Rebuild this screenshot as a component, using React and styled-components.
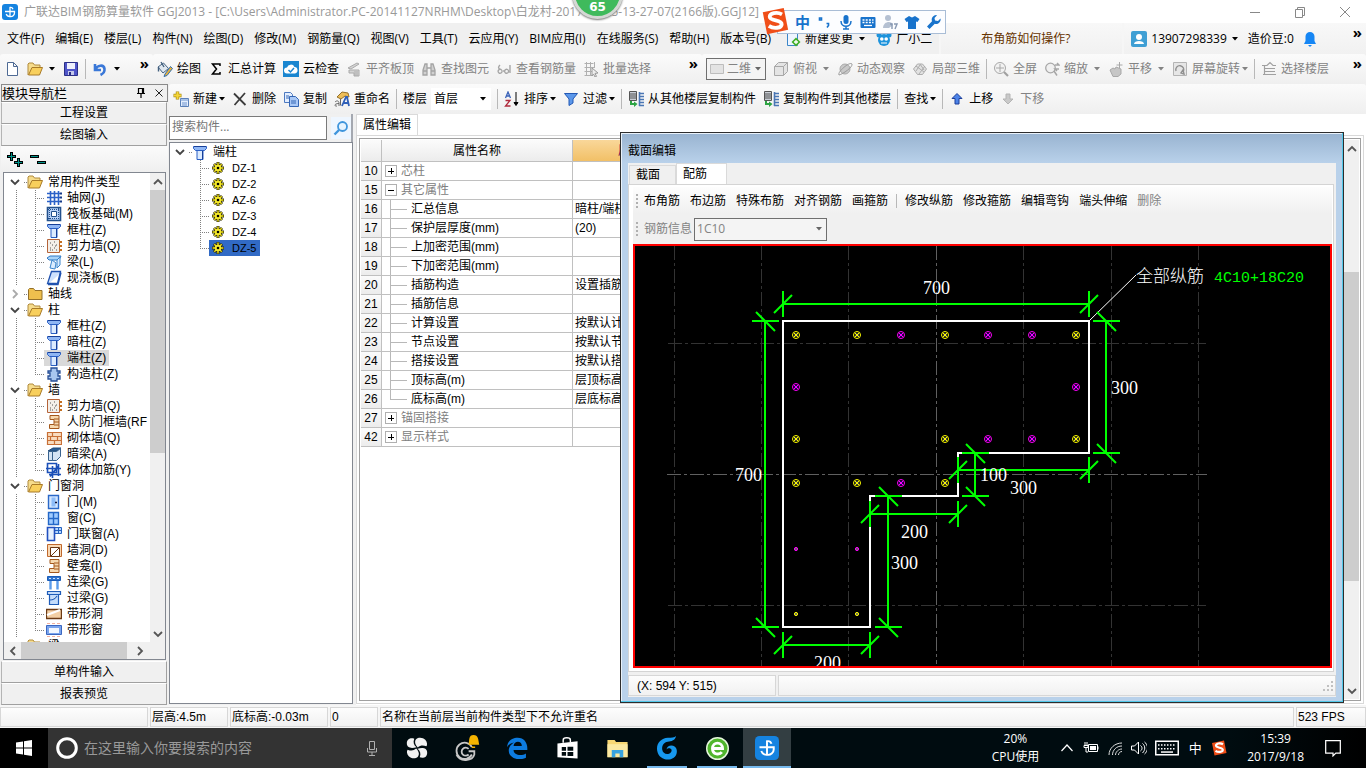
import React from "react";
import styled, { createGlobalStyle, css } from "styled-components";

const UI = `"Open Sans", "Noto Sans CJK SC", sans-serif`;
const SONG = `"Liberation Sans", "Noto Sans CJK SC", sans-serif`;

const Global = createGlobalStyle`
  *, *::before, *::after { box-sizing: border-box; }
  html, body { margin: 0; background: #f0f0f0; }
  body { font: 12px/16px ${UI}; color: #000; overflow: hidden; }
  button, input, select { font: inherit; color: inherit; margin: 0; }
  button { background: none; border: 0; padding: 0; white-space: nowrap; cursor: default; }
  svg { display: block; flex: none; }
`;

/* ---------- icons ---------- */

const blue = "#2a5fc4";
const folderOpen = (
  <>
    <path d="M1 14V3l1-1h4l1.500 2H13v3" fill="#f6dc8c" stroke="#b08a3c" />
    <path d="M1.500 14 5 6.500h10.500L12.500 14z" fill="#f8cf5c" stroke="#a87a28" />
  </>
);
const column = (
  <>
    <path d="M1.500 2.500h13v2l-2 2h-9l-2-2z" fill="#8fb6f4" stroke={blue} />
    <path d="M5 6.500h6v9H5z" fill="#dcebff" stroke={blue} />
    <path d="M10.500 7v8.500M2 2.500h12" stroke="#173f98" />
  </>
);
const wallDots = (
  <>
    <path d="M1.500 1.500h12v13h-12z" fill="#f3efe9" stroke="#b5643a" />
    <path d="M4 5h1M8 4h1M6 7h1M10 7h1M4 10h1M8 10h1M6 12h1M10 12h1M4 12h1M9 8h1" stroke="#555" />
    <path d="M13 4h3M13 8h3M13 12h3" stroke="#c47022" strokeWidth="2" />
  </>
);
const bracket = (
  <path d="M4 1.500h9v13H3.500v-4H8v-5H4z M8 5h5M8 8h5M8 11h5" fill="#f6d9b0" stroke="#a4581c" />
);

const GLYPHS = {
  app: (
    <>
      <rect width="16" height="16" rx="3" fill="#1583e0" />
      <path d="M11 5.200A2.600 2.600 0 0 0 8 3.500V12M3 7.500h9.500v1.200A3.800 3.800 0 0 1 8 12.500 3.800 3.800 0 0 1 4.200 10" fill="none" stroke="#fff" strokeWidth="1.300" />
    </>
  ),
  doc: <path d="M3.500 1.500h6l4 4v9h-10z M9.500 1.500v4h4" fill="#fff" stroke="#4e6a94" />,
  open: folderOpen,
  save: (
    <>
      <path d="M1.500 1.500h13v13h-13z" fill="#4f55c8" stroke="#2b2f86" />
      <path d="M4 2h8v6H4z" fill="#eef0fb" />
      <path d="M5 10h6v4H5z" fill="#c4c8ea" />
      <path d="M6 11h2v3H6z" fill="#2b2f86" />
    </>
  ),
  undo: <path d="M3 3v6h6M3.500 8.500C5 4 12 3 12.500 8c.3 3-2 5-4 6" fill="none" stroke="#3a78d8" strokeWidth="2.600" />,
  draw: (
    <>
      <path d="m1 6 5.500-4 5 5.500L6 12z" fill="#dfe7ef" stroke="#44617f" />
      <path d="M1.500 6v4.500M4 1l3 5" fill="none" stroke="#44617f" strokeWidth="1.400" />
      <path d="m8 13 5.500-7.500 2 2L10 14.500l-3 1z" fill="#e6b03a" stroke="#2f6fb4" />
    </>
  ),
  sum: <path d="M12 5V3H4.500l4 5-4 5H12V11" fill="none" stroke="#000" strokeWidth="1.500" />,
  cloud: (
    <>
      <rect width="16" height="16" fill="#1a86d0" />
      <path d="M4 12.500a3 3 0 0 1 0-6 4 4 0 0 1 7.500-.5A3.300 3.300 0 0 1 12 12.500z" fill="#fff" />
      <path d="m5.500 9 2 2 3.500-4" fill="none" stroke="#1a86d0" strokeWidth="1.500" />
    </>
  ),
  align: <path d="m2 7 9-5 2 1-8 5zM3 9h10v6H8v-3H3zM9 10v5M11 10v5" fill="#d4d4d4" stroke="#aaa" />,
  find: (
    <path d="M2 14V9l2-6h2v11zM14 14V9l-2-6h-2v11zM6 7h4M2 10h4M10 10h4" fill="#d0d0d0" stroke="#a4a4a4" strokeWidth="1.300" />
  ),
  glasses: (
    <path d="M5 8.500a2 2 0 1 0 .1 3.500A2 2 0 0 0 5 8.500C2 8 2 6 4 4M11.500 8.500a2 2 0 1 0 .1 3.500 2 2 0 0 0-.1-3.500M7 10h2M14 4v8" fill="none" stroke="#a6a6a6" strokeWidth="1.400" />
  ),
  batch: (
    <>
      <path d="M1.500 2.500h9M1.500 6.500h10M1.500 10.500h8M1.500 14.500h8M3.500 1v14M7.500 1v14M11.500 1v6" stroke="#b0b0b0" />
      <path d="m9 7 6 5-3 .4 1.500 3-1.500.6-1.500-3L9 15z" fill="#eee" stroke="#999" />
    </>
  ),
  flat: <path d="M1.500 3.500h13v9h-13z" fill="#e3e3e3" stroke="#bdbdbd" />,
  cube: <path d="m1.500 5.500 4-4h9v9l-4 4h-9zM1.500 5.500h9v9M10.500 5.500l4-4" fill="#e4e4e4" stroke="#a8a8a8" />,
  orbit: (
    <>
      <circle cx="8" cy="8" r="5" fill="#c9c9c9" stroke="#aaa" />
      <path d="M2 14C0 11 13 0 15 3c1 3-9 10-13 11z" fill="none" stroke="#999" />
    </>
  ),
  part3d: <path d="m1.500 8 4-5h5l4 5-4 5.500h-5zM4 5l8 6M8 3l4 6M4 10l4-6M7 13l6-8" fill="#e2e2e2" stroke="#adadad" />,
  full: (
    <>
      <circle cx="7" cy="7" r="5.500" fill="#f2f2f2" stroke="#a8a8a8" />
      <path d="M7 3v8M3 7h8" stroke="#a8a8a8" />
      <path d="m11 11 4 4" stroke="#a0a0a0" strokeWidth="2.200" />
    </>
  ),
  zoom: (
    <>
      <circle cx="6.500" cy="7" r="4.800" fill="#f0f0f0" stroke="#a8a8a8" strokeWidth="1.300" />
      <path d="m10 10 3 4.500M11 4h4l-2-2M15 8h-4l2 2" stroke="#a6a6a6" fill="none" strokeWidth="1.500" />
    </>
  ),
  pan: <path d="m2 9 3-2 2 1 1-2 5 2v5l-3 2.500H5zM11.500 1v6M8.500 4h6" fill="#c6c6c6" stroke="#a8a8a8" />,
  rotate: (
    <>
      <path d="M1.500 1.500h13v13h-13z" fill="#e6e6e6" stroke="#b4b4b4" />
      <path d="M4 10a4 4 0 1 1 7 1M12 13l-3-1 2-3z" fill="none" stroke="#909090" strokeWidth="1.400" />
    </>
  ),
  floors: <path d="M1 4.500h5l3-3 3 3h3M4 7.500h10M4 10.500h10M2 13.500h13M3.500 5v9" stroke="#a0a0a0" fill="none" strokeWidth="1.200" />,
  add: (
    <>
      <path d="M4.500.5v8M.5 4.500h8" stroke="#a88a10" strokeWidth="3.400" />
      <path d="M4.500 1v7M1 4.500h7" stroke="#f5d63a" strokeWidth="2" />
      <path d="M7.500 7.500h8v8h-8z" fill="#e4efff" stroke="#5a80b8" />
      <path d="M7 9h9M9 12h5M9 14h5" stroke="#6c92cc" />
    </>
  ),
  del: <path d="M2 2.500 13.500 14M13 2 2.500 14" stroke="#3c3c3c" strokeWidth="1.800" />,
  copy: (
    <>
      <path d="M1.500 1.500h6l2 2v8h-8z" fill="#e3eeff" stroke="#4d79c0" />
      <path d="M6.500 5.500h6l3 3v7h-9z" fill="#a9c8f6" stroke="#3566b4" />
      <path d="M3 5h3M3 7h3M8 10h5M8 12h5" stroke="#3566b4" />
    </>
  ),
  rename: (
    <>
      <path d="M3 6 8 1l6 1 1 4-4-1-4 3z" fill="#edbd58" stroke="#94702a" />
      <path d="M1 11c2-2 4-1 4 1v3M5 12.500c-5 0-5 3-2 2.500M6.500 8v6.500" fill="none" stroke="#666" />
      <path d="m8 15 4-9h1l2 9M9 12h5" fill="none" stroke="#2f5fb8" strokeWidth="1.800" />
    </>
  ),
  sort: (
    <>
      <path d="m1.500 7 2.500-6 2.500 6M2.300 5h3.400" fill="none" stroke="#3a62b8" strokeWidth="1.300" />
      <path d="M1.500 9.500h4.500L1.500 15h5" fill="none" stroke="#b02a3c" strokeWidth="1.300" />
      <path d="M12 1v12M10 11.500l2 3 2-3z" stroke="#000" />
    </>
  ),
  filter: <path d="M1.500 2.500h13L10 8v4l-4 2.500V8z" fill="#5b97ea" stroke="#2358b4" />,
  floorCopy: (
    <>
      <path d="M1.500.5h7v9h-7z" fill="#c9ced6" stroke="#555" />
      <path d="M2 3h6M2 5h6M2 7h6" stroke="#555" />
      <path d="M11.500 1v14M11 2.500h5M11 5.500h5M11 8.500h5M11 11.500h5M11 14.500h5" stroke="#4a76b4" strokeWidth="1.600" />
      <path d="M2 10v4h4v2l3.500-3L6 10.500V12H4v-2z" fill="#2ca443" />
    </>
  ),
  up: <path d="m8 2.500 5 5h-3V13H6V7.500H3z" fill="#4c83e8" stroke="#1c3f9a" />,
  down: <path d="m8 13 5-5h-3V3H6v5H3z" fill="#c9c9c9" stroke="#b4b4b4" />,
  change: (
    <>
      <path d="M2.500 1.500h10v13h-10z" fill="#eef5ff" stroke="#3b86c8" />
      <path d="m11 6.500 4.500 4.500-4.500 4.500L6.500 11z" fill="#43b02a" />
      <path d="M11 9v4M9 11h4" stroke="#fff" strokeWidth="1.300" />
    </>
  ),
  mascot: (
    <>
      <circle cx="8" cy="9" r="6" fill="#1d93dc" />
      <circle cx="3" cy="4" r="2.500" fill="#1d93dc" />
      <circle cx="13" cy="4" r="2.500" fill="#1d93dc" />
      <circle cx="5.800" cy="8" r="1.800" fill="#fff" />
      <circle cx="10.200" cy="8" r="1.800" fill="#fff" />
      <path d="M5 12h6" stroke="#fff" />
    </>
  ),
  user: (
    <>
      <rect width="16" height="16" rx="2" fill="#3f9fd4" />
      <circle cx="8" cy="6" r="3" fill="#fff" />
      <path d="M3 13c0-4 10-4 10 0z" fill="#fff" />
    </>
  ),
  bell: <path d="M8 1a4.500 4.500 0 0 1 4.500 4.500V10l1.500 3H2l1.500-3V5.500A4.500 4.500 0 0 1 8 1zM6 14h4l-2 2z" fill="#1686f4" />,
  search: (
    <>
      <circle cx="9.500" cy="6.500" r="4.500" fill="#e6f4ff" stroke="#3f95dc" strokeWidth="1.800" />
      <path d="m6 10-4.500 4.500" stroke="#3f95dc" strokeWidth="2.400" />
    </>
  ),
  folder: folderOpen,
  folderShut: <path d="M1.500 13.500v-10l1-1h4l1.500 2h7v9z" fill="#eebf4e" stroke="#94702a" />,
  grid: (
    <>
      <path d="M4.500 1v14M8.500 1v14M12.500 1v14M1 3.500h13M1 7.500h13M1 11.500h13" stroke="#2b61c8" strokeWidth="1.600" />
      <path d="M14 3.500h2M14 7.500h2M14 11.500h2" stroke="#153b8a" strokeWidth="2" />
    </>
  ),
  raft: (
    <>
      <path d="M1.500 1.500h13v13h-13z" fill="#b9d2f8" stroke="#22508c" strokeWidth="1.600" />
      <path d="M5.500 5.500h5v5h-5z" fill="#fff" stroke="#22508c" />
      <path d="M3.500 2v12M12.500 2v12M2 3.500h12M2 12.500h12" stroke="#22508c" strokeDasharray="1 1" />
    </>
  ),
  column,
  wallDots,
  bracket,
  beam: (
    <>
      <path d="m1 4 3-2h11l-2 4H3z" fill="#a9d3f8" stroke="#2f78c4" />
      <path d="m4 14 2-8 4 3-1 6zM11 14V6l3-3v8z" fill="#d9ecff" stroke="#3a86cc" />
    </>
  ),
  slab: <path d="M5.500 1.500h9l-3 12h-10z M2 14.500h10l3-12" fill="#cfe2fd" stroke="#1f52b0" strokeWidth="1.300" />,
  tieCol: (
    <path d="M5 2h6v3h3v2h-2v3h2v3h-3v2H5v-2H2v-3h2V7H2V5h3z" fill="#a8c6f0" stroke="#274f96" strokeWidth="1.300" />
  ),
  brick: (
    <path d="M1.500 2.500h14v12h-14zM1.500 6.500h14M1.500 10.500h14M6.500 2.500v4M11.500 6.500v4M4.500 6.500v4M8.500 10.500v4" fill="#f8dcc0" stroke="#c87036" strokeWidth="1.200" />
  ),
  hiddenBeam: (
    <>
      <path d="m2 5 5-3h8l-4 3z" fill="#2c5f96" stroke="#234a78" />
      <path d="M2.500 5.500h4v9h-4zM10.500 5.500l4-3v8l-4 4h-4v-9z" fill="#d3e3f5" stroke="#38628e" />
    </>
  ),
  rebarWall: (
    <path d="M1.500 1.500h9v9h-9zM0 6.500h15M6.500 4v12M4 14.500l8-10M12.500 2v12M3 12.500h12" fill="none" stroke="#1c50b8" strokeWidth="1.600" />
  ),
  door: (
    <>
      <path d="M2.500 1.500h10v13h-10z" fill="#d3e6ff" stroke="#2a68c8" strokeWidth="1.400" />
      <path d="M5.500 3.500h4v9h-4z" fill="#8dbcf8" />
      <path d="M9 8.500h2" stroke="#113" strokeWidth="1.500" />
    </>
  ),
  win: <path d="M2.500 2.500h10v12h-10zM7.500 2.500v12M2.500 8.500h10" fill="#9fcbff" stroke="#2468c8" strokeWidth="1.400" />,
  doorWin: (
    <>
      <path d="M8.500 1.500h7v6h-7zM12.500 1.500v6M8.500 4.500h7" fill="#b5d6ff" stroke="#2462c0" />
      <path d="M1.500 1.500h7v13h-7z" fill="#e6f1ff" stroke="#2250c0" strokeWidth="1.600" />
    </>
  ),
  wallHole: (
    <>
      <path d="M1.500 2.500h14v12h-14z" fill="#f8d8b4" stroke="#c0682c" />
      <path d="M4.500 5.500h9v9h-9z" fill="#fff" stroke="#6b3510" />
      <path d="m5 14 8-8" stroke="#6b3510" />
    </>
  ),
  link: (
    <>
      <path d="M1.500 2.500h13v4h-13z" fill="#2f74cc" stroke="#1b5cb8" />
      <path d="M3 4.500h10" stroke="#cfe3ff" strokeDasharray="2 2" />
      <path d="M4.500 7v8.500M11.500 7v8.500" stroke="#5b9cec" strokeWidth="2.400" />
    </>
  ),
  lintel: <path d="M1.500 1.500h13v3h-13zM3.500 4.500h9v10h-9zM4 10c3 0 5-1 7-4" fill="#c4dcfb" stroke="#1f5cb8" strokeWidth="1.200" />,
  stripHole: (
    <>
      <path d="M.5 3.500h15v9H.5z" fill="#f3cfa4" stroke="#6b3a14" strokeWidth="1.400" />
      <path d="m1 9 13-5" stroke="#fff" strokeWidth="2" />
    </>
  ),
  stripWin: (
    <>
      <path d="M.5 3.500h15v9H.5z" fill="#7aa4ec" stroke="#3b66c0" />
      <path d="M3 6h10v5H3z" fill="#f2f7ff" />
      <path d="M1 1.500h14M1 14.500h14" stroke="#f0b0a0" strokeDasharray="3 2" />
    </>
  ),
  gear: (
    <>
      <path d="M8 2v12M2 8h12M4 4l8 8M12 4l-8 8" stroke="#2b2800" strokeWidth="3" />
      <path d="M8 2.600v10.800M2.600 8h10.800M4.300 4.300l7.400 7.400M11.700 4.300l-7.400 7.400" stroke="#f0e21c" strokeWidth="1.400" />
      <circle cx="8" cy="8" r="3.200" fill="#f5e92c" />
      <circle cx="8" cy="8" r="1.300" fill="#000" />
    </>
  ),
  plusPlus: (
    <>
      <path d="M4.500 0v9M0 4.500h9M11.500 6v9M7 10.500h9" stroke="#000" strokeWidth="3" />
      <path d="M4.500 1v7M1 4.500h7M11.500 7v7M8 10.500h7" stroke="#00938a" strokeWidth="1" />
    </>
  ),
  minusMinus: (
    <>
      <path d="M0 4.500h9M7 10.500h9" stroke="#000" strokeWidth="3" />
      <path d="M1 4.500h7M8 10.500h7" stroke="#00938a" strokeWidth="1" />
    </>
  ),
  pin: <path d="M5.500 3.500h5v5h-5zM9.500 4v4M4 8.500h8M8 9v4" fill="none" stroke="#000" strokeWidth="1.200" />,
  close: <path d="m4.500 4.500 7 7M11.500 4.500l-7 7" stroke="#222" />,
  winMin: <path d="M3 8.500h10" stroke="#888" />,
  winMax: <path d="M3.500 5.500h7v8h-7zM5.500 5.500v-2h7v8h-2" fill="none" stroke="#888" />,
  winClose: <path d="m3 3 10 10M13 3 3 13" stroke="#888" />,
  sogou: (
    <>
      <path d="M1 3 13 .5 15.500 13 3.500 15.500z" fill="#f04e18" />
      <path d="M12 4.200C9 2.600 5 3.600 5 5.600c0 2.600 6.800 1.600 6.800 4.200 0 2.400-4.600 2.800-7.300 1" fill="none" stroke="#fff" strokeWidth="2.200" />
    </>
  ),
  punct: <path d="M3.500 4h2v2h-2zM10.500 9.500h2v2l-1.500 2" fill="none" stroke="#1873cc" strokeWidth="1.600" />,
  mic: (
    <>
      <rect x="5.500" y="1" width="5" height="9" rx="2.500" fill="#1873cc" />
      <path d="M3 7c0 7 10 7 10 0M8 12v3M5 15h6" fill="none" stroke="#1873cc" strokeWidth="1.500" />
    </>
  ),
  kbd: (
    <>
      <rect x=".5" y="3" width="15" height="11" rx="1" fill="#1873cc" />
      <path d="M2.500 6h11M2.500 8.500h11" stroke="#fff" strokeDasharray="2 1.200" strokeWidth="1.300" />
      <path d="M4 11.500h8" stroke="#fff" strokeWidth="1.300" />
    </>
  ),
  person: (
    <>
      <circle cx="6" cy="4" r="3" fill="#b4c0d2" />
      <path d="M1 14c0-7 9-8 10-3l-4 3z" fill="#b4c0d2" />
      <path d="M8 10h2v5M12 10h3l-2 5" fill="none" stroke="#8798b2" strokeWidth="1.400" />
    </>
  ),
  shirt: <path d="m5 2 3 1.500L11 2l4.500 3-2 3L12 7.500V15H4V7.500L2.500 8l-2-3z" fill="#1873cc" />,
  wrench: <path d="M14.500 4.500 12 7 9 6.500 8.500 4 11 1.200a4.500 4.500 0 0 0-5 6L1 12.500 3.500 15 8.800 9.800a4.500 4.500 0 0 0 5.700-5.300z" fill="#1873cc" />,
  start: <path d="M0 2.500 7 1.500v6H0zM8 1.300 16 0v7.500H8zM0 8.500h7v6L0 13.500zM8 8.500h8V16l-8-1.300z" fill="#fff" />,
  ring: <circle cx="8" cy="8" r="6.200" fill="none" stroke="#fff" strokeWidth="2" />,
  micLine: (
    <path d="M5.500 1.500h5v8h-5zM3.500 8v4h9V8M8 12v3M5 15.500h6" fill="none" stroke="#b0b0b0" />
  ),
  fan: (
    <>
      <path d="M7.600 7.400C4 8.600.6 8 .6 4.600S3.500.4 6 1.200c-1 2.600-.4 4.600 1.600 6.200z" fill="#f2f2f2" />
      <path d="M8.600 7.600C6.500 5.500 6 3 7.500 1.500S12.500.3 14 2s1.700 4 .8 4.800c-2.400-1-4.400-.8-6.200.8z" fill="#f2f2f2" />
      <path d="M8.400 8.600c3.600-1.200 7-.6 7 2.800s-2.900 4.200-5.400 3.400c1-2.600.4-4.600-1.600-6.200z" fill="#f2f2f2" />
      <path d="M7.400 8.400c2.100 2.100 2.600 4.600 1.100 6.100S3.500 15.700 2 14s-1.700-4-.8-4.800c2.400 1 4.400.8 6.200-.8z" fill="#f2f2f2" />
    </>
  ),
  swirlBell: (
    <>
      <path d="M11 7.500A5 5 0 1 0 11 12M9 8.500a2.500 2.500 0 1 0 0 3.500M9 10h3.500v2c-1 4-9 5-11 0" fill="none" stroke="#c8c8c8" strokeWidth="1.100" />
      <path d="M12 0c3 0 3 3 3.500 6H9c.5-3 0-6 3-6zM11 7h2v1h-2z" fill="#f5b400" />
    </>
  ),
  edge: (
    <path d="M.8 7.500C1 2.500 5 .5 8.500.5c4.500 0 7 3.500 7 7.500v1.500H5.500c0 4 6 4.500 9 2.500v3C9 18 2 15 2 10c0-3 2-5 4-6-3 .5-4.500 2-5.200 3.500zM5.500 6.500h6c0-4-5.500-4-6 0z" fill="#0d7ce0" fillRule="evenodd" />
  ),
  store: (
    <>
      <path d="M1 4.500 15 3v12L1 14z" fill="#fff" />
      <path d="M5 4V2c0-2 5-2 5 0v1.500" fill="none" stroke="#fff" />
      <path d="M4 7h3v2.500H4zM8 6.700h4v2.800H8zM4 10.500h3V13H4zM8 10.500h4v2.800H8z" fill="#000c10" />
    </>
  ),
  explorer: (
    <>
      <path d="M1 2h5l1 1.500h8V14H1z" fill="#f7d774" />
      <path d="M1 5h14v9H1z" fill="#fbe9a2" />
      <path d="M4 14V9h8v5h-2.500v-2.500h-3V14z" fill="#38a3e0" />
    </>
  ),
  gBlue: (
    <path d="M14 0c-.5 3-3 3.500-5.500 3.800C5.800 4.200 4.500 6.500 4.800 9c.4 3 3.700 4 5.700 2 .8-1 .8-2-.3-2.600-1-.4-2 0-2.500.6C8 6.500 11 5.500 13.300 7.200c2 1.800 1.600 5.500-.8 7.300-4 2.700-10 .8-11-4.500C.5 5 4 1.500 8.500 1.200 11 1 13 1.200 14 0z" fill="#1698ee" />
  ),
  eGreen: (
    <>
      <circle cx="8" cy="8" r="7.500" fill="#4fb52c" stroke="#e4f6dc" />
      <path d="M4.500 8h7c0-5-7-5-7 0 0 4.500 5 4.500 6.500 2.500" fill="none" stroke="#fff" strokeWidth="2" />
    </>
  ),
  trayUp: <path d="m2.500 11 5.500-6 5.500 6" fill="none" stroke="#fff" strokeWidth="1.200" />,
  battery: (
    <>
      <path d="M5.500 4.500h9v7h-9zM15 6.500v3M2 2v3M4 2v3M1 5.500h4v2H1zM3 8v4h2" fill="none" stroke="#fff" />
      <path d="M7 6h6v4H7z" fill="#fff" />
    </>
  ),
  wifi: <path d="M2 15C2 8 8 3 15 3M5.500 15c0-5 4-9 9.500-9M8.500 15c0-3 3-6 6.500-6M11.500 15c0-2 1.500-3.500 3.500-3.500" fill="none" stroke="#ddd" />,
  volume: <path d="M.5 6h3l4-4v12l-4-4h-3zM9.500 5.500c2 1.500 2 4 0 5.500M11.500 3.500c3 2.500 3 6.500 0 9.500M13.500 2c4 3 4 9 0 12" fill="none" stroke="#fff" />,
  kbdLine: (
    <>
      <path d="M.5 3.500h15v9H.5z" fill="none" stroke="#fff" />
      <path d="M2 6h12M2 8.500h12" stroke="#fff" strokeDasharray="1 1" />
      <path d="M4 10.700h8" stroke="#fff" />
    </>
  ),
  note: <path d="M1.500 1.500h13v11h-4L8 15v-2.500H1.500z" fill="none" stroke="#fff" strokeWidth="1.100" />,
};

const Icon = ({ name, size = 16 }) => (
  <svg width={size} height={size} viewBox="0 0 16 16" aria-hidden="true">{GLYPHS[name]}</svg>
);

const Triangle = ({ color = "currentColor" }) => (
  <svg width="6" height="4" viewBox="0 0 6 4" aria-hidden="true"><path d="M0 0h6L3 3.500z" fill={color} /></svg>
);

const Chevron = ({ dir = "down", color = "#444" }) => {
  const turn = { down: 0, up: 180, left: 90, right: 270 }[dir];
  return (
    <svg width="10" height="10" viewBox="0 0 10 10" aria-hidden="true">
      <path d="m1 3 4 4 4-4" fill="none" stroke={color} strokeWidth="1.800" transform={`rotate(${turn} 5 5)`} />
    </svg>
  );
};

/* ---------- frame ---------- */

const Screen = styled.div`
  height: 100vh; display: flex; flex-direction: column; overflow: hidden; position: relative;
`;
const TitleBar = styled.header`
  flex: 0 0 23px; display: flex; align-items: center; gap: 6px; padding: 0 13px 0 2px;
  background: #fff; color: #999; white-space: nowrap;
  > span { flex: 1; }
`;
const WindowButtons = styled.div`display: flex; gap: 29px;`;

const MenuRow = styled.nav`
  flex: 0 0 31px; display: flex; background: #f0f0f0;
`;
const MenuGroup = styled.div`
  display: flex; align-items: center; gap: ${p => (p.$gap === undefined ? 11 : p.$gap)}px; padding: 0 7px;
  ${p => p.$tips && css`flex: 1; padding-left: 40px; color: #663300;`}
  ${p => p.$light && css`background: linear-gradient(#f8f8f8, #f1f1f1); border-left: 2px solid #f6f6f6;`}
  ${p => p.$end && css`padding: 0 4px 0 28px; border-left: 0;`}
`;
const Strip = styled.div`
  flex: 0 0 30px; display: flex; min-width: 0; background: #f0f0f0;
`;
const Tools = styled.div`
  display: flex; align-items: center; gap: 7px; min-width: 0; overflow: hidden;
  padding: 0 4px; background: linear-gradient(#fbfbfb, #efefef); border-radius: 3px;
  ${p => p.$grow && css`flex: 1;`}
  ${p => p.$width && css`flex: 0 0 ${p.$width}px;`}
`;
const ToolBtn = styled.button`
  display: flex; align-items: center; gap: 4px; flex: none; height: 24px; line-height: 16px;
  color: ${p => (p.disabled ? "#838383" : "#000")};
`;
const CaretBox = styled.span`
  display: flex;
  ${p => (p.$split ? css`width: 9px; justify-content: center;` : css`width: 6px; margin-left: -2px;`)}
`;
const Rule = styled.span`width: 1px; height: 20px; margin: 0 -1px; background: #b8b8b8; flex: none;`;
const More = styled.button`
  align-self: flex-start; flex: none; height: 18px; font-size: 15px; line-height: 14px; font-weight: 700; margin-left: auto;
`;

const Tool = ({ icon, label, caret, ...rest }) => (
  <ToolBtn {...rest}>
    {icon && <Icon name={icon} />}
    {label}
    {caret && <CaretBox $split={caret === "split"}><Triangle /></CaretBox>}
  </ToolBtn>
);

const Combo = styled.span`
  display: flex; align-items: center; gap: 2px; flex: none; height: ${p => p.$h || 22}px; width: ${p => p.$w}px; padding: 0 4px 0 2px;
  background: ${p => (p.$plain ? "#fff" : "#f4f4f4")};
  border: 1px solid ${p => (p.$plain ? "#fff" : "#6f6f6f")};
  color: ${p => (p.$plain ? "#000" : "#838383")};
  select { flex: 1; min-width: 0; appearance: none; border: 0; background: none; padding: 0; opacity: 1; }
`;

/* ---------- body ---------- */

const Body = styled.main`flex: 1; min-height: 0; display: flex;`;
const Dock = styled.aside`
  flex: 0 0 168px; display: flex; flex-direction: column; padding: 0 1px; font-family: ${SONG};
`;
const DockHead = styled.div`
  flex: 0 0 16px; display: flex; align-items: center; gap: 2px; border: 1px solid #8a8a8a; font-size: 13px; line-height: 13px; white-space: nowrap;
  > span { flex: 1; }
`;
const DockButton = styled.button`
  flex: 0 0 22px; border: 1px solid #a0a0a0; border-left-color: #b4b4b4; border-top-color: #fff; background: #f0f0f0;
  margin-right: 1px; text-align: center;
`;
const DockTools = styled.div`
  flex: 0 0 26px; display: flex; align-items: center; gap: 7px; padding: 2px 6px 0; background: linear-gradient(#fbfbfb, #efefef);
`;
const Pane = styled.div`
  flex: 1; min-height: 0; display: flex; flex-direction: column; border: 1px solid #828790; background: #fff; overflow: hidden;
  ${p => p.$inset && css`margin: 0 2px 1px;`}
`;
const PaneRow = styled.div`flex: 1; min-height: 0; display: flex;`;
const TreeBox = styled.ul`
  flex: 1; min-width: 0; min-height: 0; overflow: hidden; margin: 0; padding: 1px 0 0; list-style: none; font-family: ${SONG};
`;
const Row = styled.li`
  display: flex; align-items: center; height: 16px; padding-left: ${p => p.$indent}px; white-space: nowrap; line-height: 16px;
`;
const dotsV = "repeating-linear-gradient(#808080 0 1px, transparent 1px 2px)";
const dotsH = "repeating-linear-gradient(90deg, #808080 0 1px, transparent 1px 2px)";
const Trunk = styled.span`
  flex: 0 0 19px; height: 16px;
  background: ${dotsV} 0 0 / 1px 100% no-repeat;
`;
const Guide = styled.span`
  flex: 0 0 9px; height: 16px;
  background: ${dotsV} 0 0 / 1px ${p => (p.$last ? "8px" : "16px")} no-repeat, ${dotsH} 0 8px / 9px 1px no-repeat;
`;
const Stub = styled.span`
  flex: 0 0 3px; margin-left: 4px; height: 16px; background: ${dotsH} 0 8px / 3px 1px no-repeat;
`;
const Leaf = styled.span`
  display: flex; align-items: center; gap: ${p => p.$gap || 5}px; height: 16px; padding: 0 ${p => (p.$gap ? 4 : 3)}px 0 ${p => (p.$gap ? 1 : 2)}px;
  background: ${p => p.$bg || "transparent"}; font-size: ${p => p.$fs || 12}px;
`;
const GroupLabel = styled.span`display: flex; align-items: center; gap: 5px;`;

const Bar = styled.div`
  display: flex; flex-direction: ${p => (p.$h ? "row" : "column")}; flex: 0 0 ${p => p.$size || 15}px;
  background: #f0f0f0; ${p => p.$h && css`padding-right: 17px;`}
`;
const BarArrow = styled.button`
  flex: 0 0 17px; display: flex; align-items: center; justify-content: center;
`;
const BarPart = styled.span`flex: ${p => p.$n} 0 0px; background: ${p => (p.$thumb ? "#cdcdcd" : "transparent")};`;

const ScrollBar = ({ horizontal, parts, size }) => (
  <Bar $h={horizontal} $size={size}>
    <BarArrow aria-label="back"><Chevron dir={horizontal ? "left" : "up"} color="#555" /></BarArrow>
    <BarPart $n={parts[0]} />
    <BarPart $n={parts[1]} $thumb />
    <BarPart $n={parts[2]} />
    <BarArrow aria-label="forward"><Chevron dir={horizontal ? "right" : "down"} color="#555" /></BarArrow>
  </Bar>
);

const MODULES = [
  ["常用构件类型", [["grid", "轴网(J)"], ["raft", "筏板基础(M)"], ["column", "框柱(Z)"], ["wallDots", "剪力墙(Q)"], ["beam", "梁(L)"], ["slab", "现浇板(B)"]]],
  ["轴线", null],
  ["柱", [["column", "框柱(Z)"], ["column", "暗柱(Z)"], ["column", "端柱(Z)", true], ["tieCol", "构造柱(Z)"]]],
  ["墙", [["wallDots", "剪力墙(Q)"], ["bracket", "人防门框墙(RF"], ["brick", "砌体墙(Q)"], ["hiddenBeam", "暗梁(A)"], ["rebarWall", "砌体加筋(Y)"]]],
  ["门窗洞", [["door", "门(M)"], ["win", "窗(C)"], ["doorWin", "门联窗(A)"], ["wallHole", "墙洞(D)"], ["bracket", "壁龛(I)"], ["link", "连梁(G)"], ["lintel", "过梁(G)"], ["stripHole", "带形洞"], ["stripWin", "带形窗"]]],
  ["梁", []],
];

const ModuleTree = () => (
  <TreeBox>
    {MODULES.map(([name, kids]) => (
      <React.Fragment key={name}>
        <Row $indent={6}>
          <Chevron dir={kids ? "down" : "right"} color={kids ? "#444" : "#aaa"} />
          <Stub />
          <GroupLabel><Icon name={kids ? "folder" : "folderShut"} />{name}</GroupLabel>
        </Row>
        {(kids || []).map(([icon, label, on], i) => (
          <Row $indent={12} key={label}>
            <Trunk />
            <Guide $last={i === kids.length - 1} />
            <Leaf $bg={on && "#d9d9d9"}><Icon name={icon} />{label}</Leaf>
          </Row>
        ))}
      </React.Fragment>
    ))}
  </TreeBox>
);

const Work = styled.section`flex: 1; min-width: 0; display: flex; flex-direction: column;`;
const WorkCols = styled.div`flex: 1; min-height: 0; display: flex; gap: 3px;`;
const Parts = styled.div`flex: 0 0 184px; display: flex; flex-direction: column; padding-bottom: 1px;`;
const SearchRow = styled.div`
  flex: 0 0 28px; display: flex; align-items: center; gap: 4px; border-right: 2px solid #a4a8b0;
  input { width: 158px; height: 24px; border: 1px solid #7a7a7a; padding: 0 2px 3px; background: #fff; font-family: ${UI}; }
  input::placeholder { color: #777; opacity: 1; }
  button { flex: 1; height: 22px; display: flex; align-items: center; justify-content: center; background: #eef6ff; }
`;

const Props = styled.div`flex: 1; min-width: 0; display: flex; flex-direction: column; background: #fff; font-family: ${SONG};`;
const TabLine = styled.div`flex: 0 0 19px; display: flex; align-items: flex-end;`;
const Tab = styled.button`
  height: ${p => (p.$on ? 21 : 19)}px; padding: 0 6px; text-align: left; font-family: ${SONG};
  ${p => p.$w && css`width: ${p.$w}px;`}
  border: 1px solid #dadada; border-bottom: 0; background: ${p => (p.$on ? "#fff" : "#f0f0f0")};
`;
const PropsFrame = styled.div`
  flex: 1; min-height: 0; display: flex; margin-right: 2px; padding: 2px; border: 1px solid #d9d9d9; margin-bottom: 1px;
`;
const PropsInner = styled.div`
  flex: 1; min-width: 0; display: flex; border: 1px solid #a0a0a0; padding: 1px;
`;
const TableWrap = styled.div`flex: 1; min-width: 0;`;
const Grid = styled.table`
  width: 100%; table-layout: fixed; border-collapse: separate; border-spacing: 0;
  th, td { padding: 0; border-right: 1px solid #c0c0c0; border-bottom: 1px solid #c0c0c0; font-weight: 400; height: 19px; line-height: 16px; white-space: nowrap; overflow: hidden; }
  thead th { height: 22px; background: linear-gradient(#fbfbfb, #ececec); }
  thead th.hot { background: linear-gradient(#f9d79a, #f2c066); color: #6b004a; }
  tbody th { background: linear-gradient(#fbfbfb, #ececec); text-align: center; }
  td.val { padding-left: 2px; }
`;
const NameCell = styled.span`
  display: flex; align-items: center; height: 18px; padding-left: ${p => (p.$group ? 3 : 8)}px; gap: 4px; color: ${p => (p.$group ? "#808080" : "#000")};
`;
const Expander = styled.button`
  width: 12px; height: 12px; border: 1px solid #b0b0b0; background:
    linear-gradient(#000, #000) center / 6px 1px no-repeat
    ${p => p.$plus && css`, linear-gradient(#000, #000) center / 1px 6px no-repeat`};
`;
const Twig = styled.span`
  width: 17px; height: 18px;
  background: linear-gradient(#b8b8b8, #b8b8b8) 0 0 / 1px ${p => (p.$last ? "9px" : "18px")} no-repeat, linear-gradient(#b8b8b8, #b8b8b8) 0 9px / 17px 1px no-repeat;
`;

const PROPS = [
  [10, "芯柱", "", "plus"], [15, "其它属性", "", "minus"], [16, "汇总信息", "暗柱/端柱"], [17, "保护层厚度(mm)", "(20)"],
  [18, "上加密范围(mm)", ""], [19, "下加密范围(mm)", ""], [20, "插筋构造", "设置插筋"], [21, "插筋信息", ""],
  [22, "计算设置", "按默认计算设置计算"], [23, "节点设置", "按默认节点设置计算"], [24, "搭接设置", "按默认搭接设置计算"],
  [25, "顶标高(m)", "层顶标高"], [26, "底标高(m)", "层底标高"], [27, "锚固搭接", "", "plus"], [42, "显示样式", "", "plus"],
];

const PropTable = () => (
  <Grid>
    <colgroup><col width="21" /><col width="191" /><col width="127" /><col /></colgroup>
    <thead><tr><th /><th>属性名称</th><th className="hot">属性值</th><th>附加</th></tr></thead>
    <tbody>
      {PROPS.map(([n, name, value, kind]) => (
        <tr key={n}>
          <th scope="row">{n}</th>
          <td>
            <NameCell $group={!!kind}>
              {kind ? <Expander $plus={kind === "plus"} aria-label={name} /> : <Twig $last={n === 26} />}
              {name}
            </NameCell>
          </td>
          <td className="val">{value}</td>
          <td />
        </tr>
      ))}
    </tbody>
  </Grid>
);

/* ---------- section editor window ---------- */

const Dialog = styled.section`
  position: absolute; left: 620px; right: 22px; top: 132px; bottom: 65px; display: flex; flex-direction: column;
  border: 1px solid #2d2d2d; padding: 1px 7px 5px; background: #b9d1ea; box-shadow: inset -1px -1px #52c8ea, inset 1px 1px #e8f1fa;
`;
const DialogTitle = styled.h2`
  flex: 0 0 29px; margin: 0 -6px; padding: 9px 6px 0; background: linear-gradient(#99b4d1, #b9d1ea); font-size: 12px; line-height: 16px; font-weight: 400;
`;
const Client = styled.div`flex: 1; min-height: 0; display: flex; flex-direction: column; background: #f0f0f0;`;
const Tabs = styled.div`flex: 0 0 20px; display: flex; align-items: flex-end; padding-left: 1px;`;
const Sheet = styled.div`
  flex: 1; min-height: 0; display: flex; flex-direction: column; margin: 0 2px 2px 0; padding: 2px 1px 3px 4px;
  border: 1px solid #d4d4d4; background: #fff;
`;
const EditBar = styled.div`
  flex: 0 0 ${p => p.$h}px; display: flex; align-items: center; gap: 10px; padding-left: 3px;
  background: ${p => (p.$flat ? "#f0f0f0" : "linear-gradient(#fdfdfd, #f0f0f0)")};
  ${Rule} { margin: 0 -2px; height: 14px; }
`;
const Grip = styled.span`
  width: 2px; height: 14px; margin-right: -4px;
  background: repeating-linear-gradient(#b0b0b0 0 2px, transparent 2px 4px);
`;
const SteelField = styled.div`display: flex; align-items: center; gap: 2px; color: #838383;`;
const Canvas = styled.div`
  flex: 1; min-height: 0; border: 2px solid #f00; background: #000; overflow: hidden;
  svg { width: 100%; height: 100%; }
  .dim { font: 18px "Liberation Serif", serif; fill: #fff; }
  .note { font: 300 17px "Noto Sans CJK SC", sans-serif; fill: #fff; }
  .steel { font: 15px "Liberation Mono", monospace; fill: #0f0; }
`;
const DialogStatus = styled.div`
  flex: 0 0 23px; display: flex; gap: 2px; padding: 1px 0;
`;
const StatusCell = styled.span`
  border: 1px solid #d7d7d7; background: linear-gradient(#fdfdfd, #f1f1f1); font: 12px/18px ${SONG}; white-space: nowrap;
  padding: 0 ${p => p.$pad || 1}px; overflow: hidden; display: flex; justify-content: space-between; align-items: center;
  ${p => (p.$w ? css`flex: 0 0 ${p.$w}px;` : css`flex: 1;`)}
`;

const DimH = ({ x1, x2, y }) => (
  <path d={`M${x1} ${y}H${x2}M${x1} ${y - 13}v26M${x2} ${y - 13}v26M${x1 - 9} ${y + 9}l18-18M${x2 - 9} ${y + 9}l18-18`} />
);
const DimV = ({ y1, y2, x }) => (
  <path d={`M${x} ${y1}V${y2}M${x - 13} ${y1}h27M${x - 13} ${y2}h27M${x - 9} ${y1 - 9}l19 19M${x - 9} ${y2 - 9}l19 19`} />
);
const YELLOW = [[161, 89], [222, 89], [310, 89], [441, 89], [161, 193], [310, 193], [441, 193], [161, 237], [222, 237], [310, 237]];
const MAGENTA = [[266, 89], [353, 89], [397, 89], [161, 141], [441, 141], [353, 193], [397, 193], [266, 237]];
const STIRRUPS = [[161, 303, "#f0f"], [222, 303, "#f0f"], [161, 368, "#ff0"], [222, 368, "#ff0"]];

const Bars = ({ points, color, core }) => points.map(([x, y]) => (
  <g key={`${x}-${y}`}>
    <circle cx={x} cy={y} r="3.500" fill="#000" stroke={color} />
    <path d={`M${x - 2} ${y}h4M${x} ${y - 2}v4`} stroke={core} />
    <path d={`M${x - 2} ${y - 2}l4 4M${x + 2} ${y - 2}l-4 4`} stroke={color} strokeWidth="1" />
  </g>
));

const Drawing = () => (
  <svg aria-label="端柱截面">
    <g stroke="#333" strokeDasharray="14 3 3 3">
      {[39.5, 126.5, 213.5, 388.5, 476.5, 563.5].map(x => <path key={x} d={`M${x} 0V600`} />)}
      <path d="M33 97.500h538M33 359.500h538" />
      <path d="M301.500 0V418M32 228.500h540" stroke="#606060" />
    </g>
    <path d="M148 75H454V207H323V250H235V381H148Z" fill="none" stroke="#fff" strokeWidth="2" />
    <path d="M454 75 501 29" stroke="#fff" />
    <Bars points={YELLOW} color="#ff0" core="#888" />
    <Bars points={MAGENTA} color="#f0f" core="#40c" />
    {STIRRUPS.map(([x, y, c]) => <circle key={`${x}-${y}`} cx={x} cy={y} r="1.600" fill="#666" stroke={c} />)}
    <g fill="none" stroke="#0f0" strokeWidth="2">
      <DimH x1={148} x2={454} y={58} />
      <DimH x1={323} x2={454} y={224} />
      <DimH x1={235} x2={323} y={268} />
      <DimH x1={148} x2={235} y={399} />
      <DimV y1={75} y2={381} x={130} />
      <DimV y1={75} y2={207} x={471} />
      <DimV y1={207} y2={250} x={340} />
      <DimV y1={250} y2={381} x={253} />
    </g>
    <g className="dim">
      <text x="288" y="48">700</text>
      <text x="100" y="235">700</text>
      <text x="476" y="148">300</text>
      <text x="345" y="235">100</text>
      <text x="375" y="248">300</text>
      <text x="266" y="292">200</text>
      <text x="256" y="323">300</text>
      <text x="179" y="423">200</text>
    </g>
    <text className="note" x="501" y="36">全部纵筋</text>
    <text className="steel" x="579" y="36">4C10+18C20</text>
  </svg>
);

const SizeGrip = () => (
  <svg width="12" height="12" viewBox="0 0 12 12" aria-hidden="true">
    <path d="M9 1h2v2H9zM5 5h2v2H5zM9 5h2v2H9zM1 9h2v2H1zM5 9h2v2H5zM9 9h2v2H9z" fill="#c0c0c0" />
  </svg>
);

const SectionEditor = () => (
  <Dialog aria-label="截面编辑">
    <DialogTitle>截面编辑</DialogTitle>
    <Client>
      <Tabs><Tab $w={47}>截面</Tab><Tab $on $w={51}>配筋</Tab></Tabs>
      <Sheet>
        <EditBar $h={27}>
          <Grip />
          {["布角筋", "布边筋", "特殊布筋", "对齐钢筋", "画箍筋"].map(t => <ToolBtn key={t}>{t}</ToolBtn>)}
          <Rule />
          {["修改纵筋", "修改箍筋", "编辑弯钩", "端头伸缩"].map(t => <ToolBtn key={t}>{t}</ToolBtn>)}
          <ToolBtn disabled>删除</ToolBtn>
        </EditBar>
        <EditBar $h={30} $flat>
          <Grip />
          <SteelField>
            <label htmlFor="steel">钢筋信息</label>
            <Combo $w={133} $h={23}>
              <select id="steel" disabled><option>1C10</option></select>
              <Triangle color="#666" />
            </Combo>
          </SteelField>
        </EditBar>
        <Canvas><Drawing /></Canvas>
      </Sheet>
      <DialogStatus>
        <StatusCell $w={148} $pad={8}>(X: 594 Y: 515)</StatusCell>
        <StatusCell><span /><SizeGrip /></StatusCell>
      </DialogStatus>
    </Client>
  </Dialog>
);

/* ---------- overlays ---------- */

const Ball = styled.div`
  position: absolute; left: 572px; top: -32px; width: 51px; height: 51px; border-radius: 50%; border: 3px solid #d4d8d4;
  background: #3fba5c; color: #fff; font: 700 12px/14px "DejaVu Sans", sans-serif; text-align: center; padding-top: 29px; box-shadow: 0 1px 2px #777;
`;
const Ime = styled.div`
  position: absolute; left: 777px; top: 10px; width: 169px; height: 24px; display: flex; align-items: center; justify-content: space-between;
  padding: 0 3px 0 17px; background: #fcfdff; border: 1px solid #a9bdd6; color: #1873cc; font: 700 15px/20px "Noto Sans CJK SC", sans-serif;
`;
const ImeLogo = styled.span`position: absolute; left: 761px; top: 7px;`;

/* ---------- bottom ---------- */

const StatusBar = styled.footer`flex: 0 0 22px; display: flex; gap: 2px; padding: 2px 0 1px; background: #f6f6f6;`;

const TaskBar = styled.footer`
  flex: 0 0 40px; display: flex; background: linear-gradient(90deg, #000c10, #000c10 90%, #000); color: #fff;
`;
const StartBtn = styled.button`width: 48px; display: flex; align-items: center; justify-content: center; background: #000;`;
const TaskSearch = styled.label`
  flex: 0 0 344px; display: flex; align-items: center; gap: 5px; padding: 0 12px 0 7px; background: #333;
  input { flex: 1; min-width: 0; border: 0; background: none; padding: 0; font-size: 14px; line-height: 20px; }
  input::placeholder { color: #999; opacity: 1; }
`;
const Apps = styled.div`display: flex; gap: 2px; flex: 1; padding-left: 1px;`;
const AppBtn = styled.button`
  width: 48px; display: flex; align-items: center; justify-content: center;
  ${p => p.$run && css`background: linear-gradient(#76b9ed, #76b9ed) center bottom / 40px 2px no-repeat;`}
  ${p => p.$on && css`background: linear-gradient(#76b9ed, #76b9ed) center bottom / 48px 2px no-repeat #333e42;`}
`;
const Tray = styled.div`display: flex; align-items: center; gap: 8px; padding-right: 24px; white-space: nowrap;`;
const Stack = styled.div`display: flex; flex-direction: column; align-items: center; line-height: 18px; padding: 0 12px;`;
const TrayText = styled.span`font-size: 13px; width: 16px; text-align: center;`;

const FloorField = styled.div`display: flex; align-items: center; gap: 4px; flex: none;`;

const MENUS = ["文件(F)", "编辑(E)", "楼层(L)", "构件(N)", "绘图(D)", "修改(M)", "钢筋量(Q)", "视图(V)", "工具(T)", "云应用(Y)", "BIM应用(I)", "在线服务(S)", "帮助(H)", "版本号(B)"];

export default function App() {
  return (
    <Screen>
      <Global />
      <TitleBar>
        <Icon name="app" />
        <span>广联达BIM钢筋算量软件 GGJ2013 - [C:\Users\Administrator.PC-20141127NRHM\Desktop\白龙村-2017-08-25-13-27-07(2166版).GGJ12]</span>
        <WindowButtons>
          <button aria-label="最小化"><Icon name="winMin" /></button>
          <button aria-label="还原"><Icon name="winMax" /></button>
          <button aria-label="关闭"><Icon name="winClose" /></button>
        </WindowButtons>
      </TitleBar>

      <MenuRow>
        <MenuGroup>
          {MENUS.map(m => <button key={m}>{m}</button>)}
        </MenuGroup>
        <MenuGroup $gap={10}>
          <Tool icon="change" label="新建变更" caret="split" />
          <Tool icon="mascot" label="广小二" />
        </MenuGroup>
        <MenuGroup $tips $light>布角筋如何操作?</MenuGroup>
        <MenuGroup $light $gap={8}>
          <Tool icon="user" label="13907298339" caret="split" />
          <ToolBtn>造价豆:0</ToolBtn>
          <ToolBtn aria-label="通知"><Icon name="bell" /></ToolBtn>
        </MenuGroup>
        <MenuGroup $light $end><More aria-label="更多">»</More></MenuGroup>
      </MenuRow>

      <Strip>
        <Tools $width={153}>
          <Tool icon="doc" aria-label="新建" />
          <Tool icon="open" caret="split" aria-label="打开" />
          <Tool icon="save" aria-label="保存" />
          <Rule />
          <Tool icon="undo" caret="split" aria-label="撤销" />
          <More>»</More>
        </Tools>
        <Tools $width={549}>
          <Tool icon="draw" label="绘图" />
          <Tool icon="sum" label="汇总计算" />
          <Tool icon="cloud" label="云检查" />
          <Tool icon="align" label="平齐板顶" disabled />
          <Tool icon="find" label="查找图元" disabled />
          <Tool icon="glasses" label="查看钢筋量" disabled />
          <Tool icon="batch" label="批量选择" disabled />
          <More>»</More>
        </Tools>
        <Tools $grow>
          <Combo $w={60}>
            <Icon name="flat" />
            <select aria-label="视图模式" disabled><option>二维</option></select>
            <Triangle color="#666" />
          </Combo>
          <Tool icon="cube" label="俯视" caret="split" disabled />
          <Tool icon="orbit" label="动态观察" disabled />
          <Tool icon="part3d" label="局部三维" disabled />
          <Rule />
          <Tool icon="full" label="全屏" disabled />
          <Tool icon="zoom" label="缩放" caret="split" disabled />
          <Tool icon="pan" label="平移" caret="split" disabled />
          <Tool icon="rotate" label="屏幕旋转" caret="near" disabled />
          <Rule />
          <Tool icon="floors" label="选择楼层" disabled />
          <More>»</More>
        </Tools>
      </Strip>

      <Body>
        <Dock>
          <DockHead><span>模块导航栏</span><Icon name="pin" /><Icon name="close" /></DockHead>
          <DockButton>工程设置</DockButton>
          <DockButton>绘图输入</DockButton>
          <DockTools>
            <button aria-label="全部展开"><Icon name="plusPlus" /></button>
            <button aria-label="全部折叠"><Icon name="minusMinus" /></button>
          </DockTools>
          <Pane $inset>
            <PaneRow>
              <ModuleTree />
              <ScrollBar parts={[0, 262, 171]} />
            </PaneRow>
            <ScrollBar horizontal parts={[0, 102, 4]} size={17} />
          </Pane>
          <DockButton>单构件输入</DockButton>
          <DockButton>报表预览</DockButton>
        </Dock>

        <Work>
          <Strip>
            <Tools $grow>
              <Tool icon="add" label="新建" caret="near" />
              <Tool icon="del" label="删除" />
              <Tool icon="copy" label="复制" />
              <Tool icon="rename" label="重命名" />
              <Rule />
              <FloorField>
                <label htmlFor="floor">楼层</label>
                <Combo $plain $w={60}>
                  <select id="floor"><option>首层</option></select>
                  <Triangle />
                </Combo>
              </FloorField>
              <Rule />
              <Tool icon="sort" label="排序" caret="near" />
              <Tool icon="filter" label="过滤" caret="near" />
              <Rule />
              <Tool icon="floorCopy" label="从其他楼层复制构件" />
              <Tool icon="floorCopy" label="复制构件到其他楼层" />
              <Rule />
              <Tool label="查找" caret="near" />
              <Rule />
              <Tool icon="up" label="上移" />
              <Tool icon="down" label="下移" disabled />
            </Tools>
          </Strip>
          <WorkCols>
            <Parts>
              <SearchRow>
                <input type="text" aria-label="搜索构件" placeholder="搜索构件..." />
                <button aria-label="搜索"><Icon name="search" /></button>
              </SearchRow>
              <Pane>
                <TreeBox>
                  <Row $indent={5}>
                    <Chevron /><Stub />
                    <GroupLabel><Icon name="column" />端柱</GroupLabel>
                  </Row>
                  {["DZ-1", "DZ-2", "AZ-6", "DZ-3", "DZ-4", "DZ-5"].map((n, i) => (
                    <Row $indent={30} key={n}>
                      <Guide $last={i === 5} />
                      <Leaf $gap={6} $fs={11} $bg={i === 5 && "#316ac5"}><Icon name="gear" />{n}</Leaf>
                    </Row>
                  ))}
                </TreeBox>
              </Pane>
            </Parts>
            <Props>
              <TabLine><Tab $on>属性编辑</Tab></TabLine>
              <PropsFrame>
                <PropsInner>
                  <TableWrap><PropTable /></TableWrap>
                  <ScrollBar parts={[116, 310, 102]} />
                </PropsInner>
              </PropsFrame>
            </Props>
          </WorkCols>
        </Work>
      </Body>

      <StatusBar>
        <StatusCell $w={148} />
        <StatusCell $w={78}>层高:4.5m</StatusCell>
        <StatusCell $w={98}>底标高:-0.03m</StatusCell>
        <StatusCell $w={48}>0</StatusCell>
        <StatusCell>名称在当前层当前构件类型下不允许重名</StatusCell>
        <StatusCell $w={70}>523 FPS</StatusCell>
      </StatusBar>

      <TaskBar>
        <StartBtn aria-label="开始"><Icon name="start" /></StartBtn>
        <TaskSearch>
          <Icon name="ring" size={24} />
          <input type="text" aria-label="搜索" placeholder="在这里输入你要搜索的内容" />
          <Icon name="micLine" />
        </TaskSearch>
        <Apps>
          <AppBtn aria-label="风扇"><Icon name="fan" size={22} /></AppBtn>
          <AppBtn aria-label="提醒"><Icon name="swirlBell" size={26} /></AppBtn>
          <AppBtn aria-label="Edge"><Icon name="edge" size={22} /></AppBtn>
          <AppBtn aria-label="应用商店"><Icon name="store" size={23} /></AppBtn>
          <AppBtn aria-label="文件资源管理器"><Icon name="explorer" size={23} /></AppBtn>
          <AppBtn $run aria-label="广联达"><Icon name="gBlue" size={24} /></AppBtn>
          <AppBtn $run aria-label="浏览器"><Icon name="eGreen" size={23} /></AppBtn>
          <AppBtn $on aria-label="GGJ2013"><Icon name="app" size={24} /></AppBtn>
        </Apps>
        <Tray>
          <Stack><span>20%</span><span>CPU使用</span></Stack>
          <Icon name="trayUp" />
          <Icon name="battery" />
          <Icon name="wifi" />
          <Icon name="volume" />
          <Icon name="kbdLine" size={24} />
          <TrayText>中</TrayText>
          <Icon name="sogou" />
          <Stack><span>15:39</span><span>2017/9/18</span></Stack>
          <Icon name="note" size={18} />
        </Tray>
      </TaskBar>

      <SectionEditor />
      <Ball>65</Ball>
      <Ime>
        <span>中</span>
        <Icon name="punct" /><Icon name="mic" /><Icon name="kbd" /><Icon name="person" /><Icon name="shirt" /><Icon name="wrench" />
      </Ime>
      <ImeLogo><Icon name="sogou" size={28} /></ImeLogo>
    </Screen>
  );
}
